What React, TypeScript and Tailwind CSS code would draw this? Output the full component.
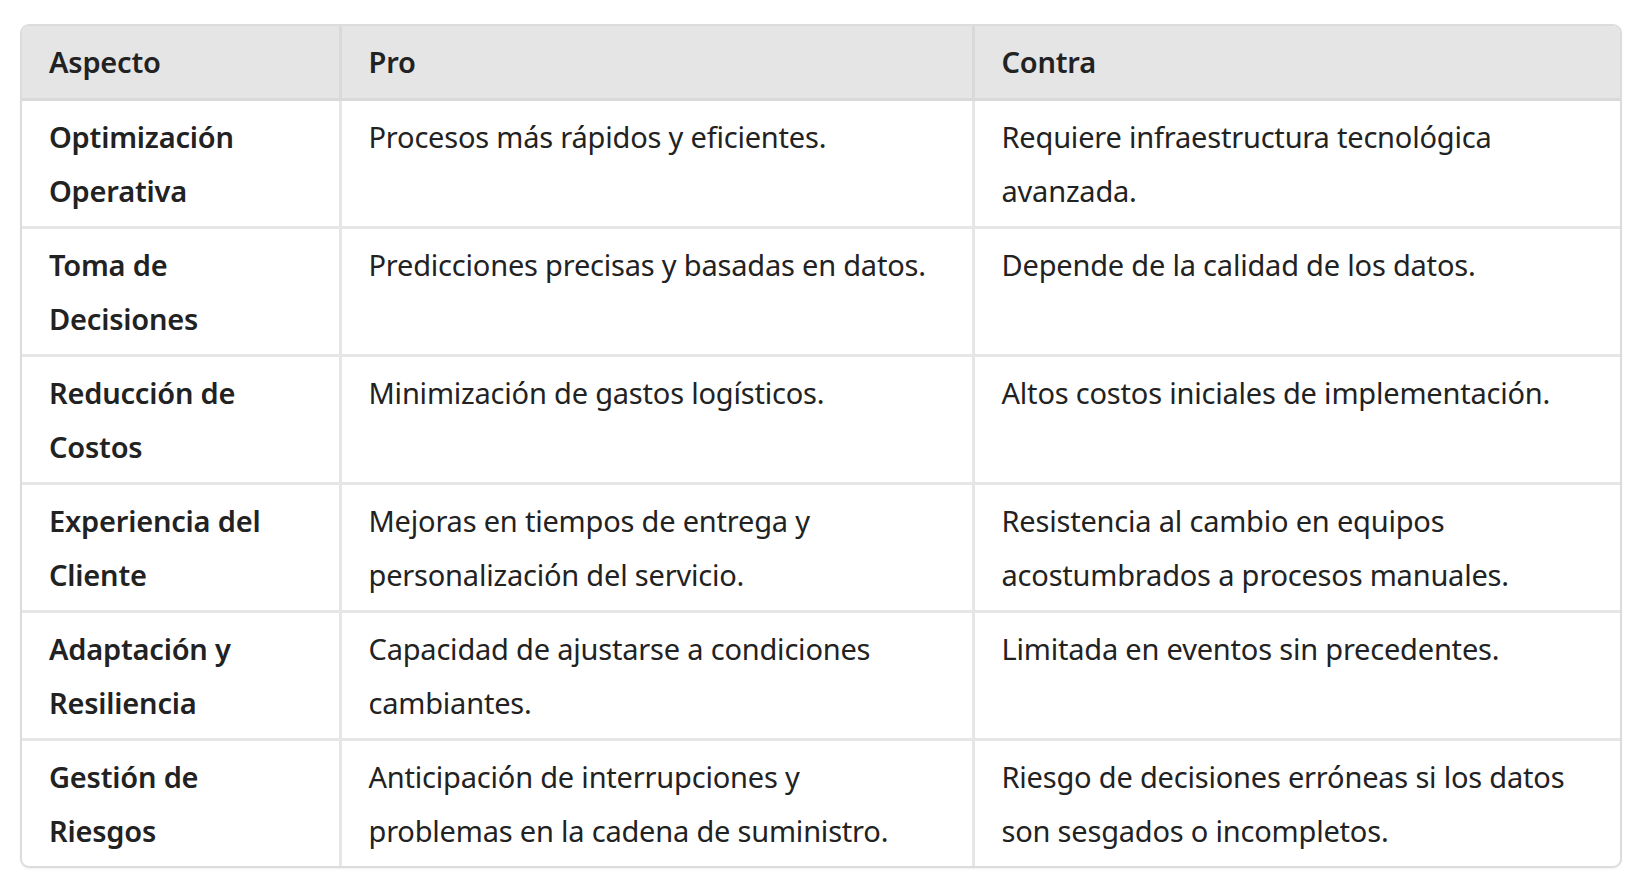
import React from "react";

const rows: [string, string, string][] = [
  ["Optimización Operativa", "Procesos más rápidos y eficientes.", "Requiere infraestructura tecnológica avanzada."],
  ["Toma de Decisiones", "Predicciones precisas y basadas en datos.", "Depende de la calidad de los datos."],
  ["Reducción de Costos", "Minimización de gastos logísticos.", "Altos costos iniciales de implementación."],
  ["Experiencia del Cliente", "Mejoras en tiempos de entrega y personalización del servicio.", "Resistencia al cambio en equipos acostumbrados a procesos manuales."],
  ["Adaptación y Resiliencia", "Capacidad de ajustarse a condiciones cambiantes.", "Limitada en eventos sin precedentes."],
  ["Gestión de Riesgos", "Anticipación de interrupciones y problemas en la cadena de suministro.", "Riesgo de decisiones erróneas si los datos son sesgados o incompletos."],
];

export default function App() {
  return (
    <div
      className="w-[1641px] h-[890px] bg-white pt-[24px] pl-[20px]"
      style={{ fontFamily: '"Noto Sans", "Open Sans", sans-serif' }}
    >
      <div className="w-[1602px] border-2 border-[#dcdcdc] rounded-[9px] overflow-hidden shadow-[0_1px_2px_rgba(0,0,0,0.06)]">
        <table className="w-full table-fixed border-collapse text-[29px] leading-[54px] text-[#222222] tracking-[-0.2px]">
          <colgroup>
            <col className="w-[318px]" />
            <col className="w-[633px]" />
            <col className="w-[647px]" />
          </colgroup>
          <thead>
            <tr className="bg-[#e5e5e5]">
              <th className="text-left font-semibold pl-[27px] pr-[30px] py-[9px] border-b-[3px] border-r-[3px] border-[#d9d9d9]">Aspecto</th>
              <th className="text-left font-semibold pl-[27px] pr-[35px] py-[9px] border-b-[3px] border-r-[3px] border-[#d9d9d9]">Pro</th>
              <th className="text-left font-semibold pl-[27px] pr-[20px] py-[9px] border-b-[3px] border-[#d9d9d9]">Contra</th>
            </tr>
          </thead>
          <tbody>
            {rows.map((r, i) => {
              const last = i === rows.length - 1;
              return (
                <tr key={i} className="align-top">
                  <td className={`font-semibold pl-[27px] pr-[30px] pt-[9px] pb-[8px] border-r-[3px] border-[#e6e6e6] ${last ? "" : "border-b-[3px]"}`}>{r[0]}</td>
                  <td className={`pl-[27px] pr-[35px] pt-[9px] pb-[8px] border-r-[3px] border-[#e6e6e6] ${last ? "" : "border-b-[3px]"}`}>{r[1]}</td>
                  <td className={`pl-[27px] pr-[20px] pt-[9px] pb-[8px] border-[#e6e6e6] ${last ? "" : "border-b-[3px]"}`}>{r[2]}</td>
                </tr>
              );
            })}
          </tbody>
        </table>
      </div>
    </div>
  );
}
